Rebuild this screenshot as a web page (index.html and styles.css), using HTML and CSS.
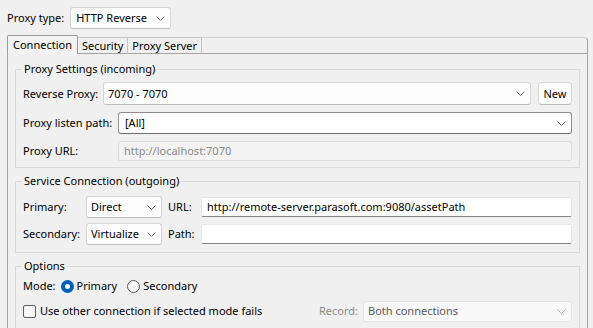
FILE: index.html
```html
<!DOCTYPE html>
<html lang="en">
  <head>
    <meta charset="UTF-8" />
    <title>Proxy Settings</title>
    <link rel="stylesheet" href="styles.css">
  </head>
  <body>
    <div class="type-row">
      <label>Proxy type:</label>
      <div class="combo combo-type">
        <span>HTTP Reverse</span>
        <svg class="chev" width="9" height="5" viewBox="0 0 9 5"><polyline points="0.5,0.5 4.5,4.5 8.5,0.5" /></svg>
      </div>
    </div>

    <div class="tabs">
      <div class="tab active">Connection</div>
      <div class="tab">Security</div>
      <div class="tab">Proxy Server</div>
      <div class="tab-fill"></div>
    </div>

    <div class="panel">
      <fieldset class="group">
        <legend>Proxy Settings (incoming)</legend>
        <div class="row row-tall">
          <label class="lbl-rev">Reverse Proxy:</label>
          <div class="combo grow">
            <span>7070 - 7070</span>
            <svg class="chev" width="9" height="5" viewBox="0 0 9 5"><polyline points="0.5,0.5 4.5,4.5 8.5,0.5" /></svg>
          </div>
          <button class="btn">New</button>
        </div>
        <div class="row row-listen">
          <label class="lbl-path">Proxy listen path:</label>
          <div class="combo combo-edit grow">
            <span>[All]</span>
            <svg class="chev" width="9" height="5" viewBox="0 0 9 5"><polyline points="0.5,0.5 4.5,4.5 8.5,0.5" /></svg>
          </div>
        </div>
        <div class="row row-url">
          <label class="lbl-path">Proxy URL:</label>
          <div class="field disabled grow">http://localhost:7070</div>
        </div>
      </fieldset>

      <fieldset class="group group-service">
        <legend>Service Connection (outgoing)</legend>
        <div class="row">
          <label class="lbl-conn">Primary:</label>
          <div class="combo combo-mode">
            <span>Direct</span>
            <svg class="chev" width="9" height="5" viewBox="0 0 9 5"><polyline points="0.5,0.5 4.5,4.5 8.5,0.5" /></svg>
          </div>
          <label class="lbl-side">URL:</label>
          <div class="field grow">http://remote-server.parasoft.com:9080/assetPath</div>
        </div>
        <div class="row row-second">
          <label class="lbl-conn">Secondary:</label>
          <div class="combo combo-mode">
            <span>Virtualize</span>
            <svg class="chev" width="9" height="5" viewBox="0 0 9 5"><polyline points="0.5,0.5 4.5,4.5 8.5,0.5" /></svg>
          </div>
          <label class="lbl-side">Path:</label>
          <div class="field grow"></div>
        </div>
      </fieldset>

      <fieldset class="group group-options">
        <legend>Options</legend>
        <div class="mode-row">
          <span>Mode:</span>
          <label class="choice first"><input type="radio" name="mode" checked /> Primary</label>
          <label class="choice"><input type="radio" name="mode" /> Secondary</label>
        </div>
        <div class="row row-check">
          <label class="choice check"><input type="checkbox" /> Use other connection if selected mode fails</label>
          <div class="record">
            <span class="muted">Record:</span>
            <div class="combo combo-off">
              <span>Both connections</span>
              <svg class="chev" width="9" height="5" viewBox="0 0 9 5"><polyline points="0.5,0.5 4.5,4.5 8.5,0.5" /></svg>
            </div>
          </div>
        </div>
      </fieldset>
    </div>
  </body>
</html>
```

FILE: styles.css
```css
* {
  box-sizing: border-box;
}

html,
body {
  margin: 0;
}

body {
  font-family: "Noto Sans", "Segoe UI", sans-serif;
  font-size: 11px;
  line-height: 16px;
  color: #000;
  background: #f0f0f0;
  padding: 7px 5px 0 7px;
  height: 328px;
  overflow: hidden;
}

.type-row {
  display: flex;
  align-items: center;
  gap: 6px;
  height: 22px;
}

.combo {
  display: flex;
  align-items: center;
  justify-content: space-between;
  height: 22px;
  padding: 0 5px 0 4px;
  background: #fdfdfd;
  border: 1px solid #d6d6d6;
  border-bottom-color: #bdbdbd;
  border-radius: 3px;
  white-space: nowrap;
}

.combo-type {
  width: 101px;
  padding-left: 5px;
}

.chev {
  flex: none;
}

.chev polyline {
  fill: none;
  stroke: #707070;
  stroke-width: 1;
}

.tabs {
  display: flex;
  align-items: flex-end;
  height: 19px;
  margin-top: 6px;
}

.tab {
  height: 17px;
  padding: 0 4px;
  line-height: 15px;
  border: 1px solid #c4c4c4;
  border-left: none;
  border-bottom-color: #a3a3a3;
  white-space: nowrap;
}

.tab.active {
  height: 19px;
  padding: 0 5px;
  line-height: 18px;
  border: 1px solid #9a9a9a;
  border-bottom: none;
  border-radius: 2px 2px 0 0;
  background: #f3f3f3;
}

.tab-fill {
  flex: 1;
  height: 17px;
  border: 1px solid #a3a3a3;
  border-left: none;
  border-top-color: #cfcfcf;
  border-top-right-radius: 4px;
}

.panel {
  border: 1px solid #a3a3a3;
  border-top: none;
  padding: 7px 7px 0 7px;
  height: 300px;
}

.group {
  margin: 0;
  min-width: 0;
  border: 1px solid #dadada;
  padding: 5px 7px 6px 7px;
}

.group legend {
  margin-left: -1px;
  padding: 0 2px;
  line-height: 16px;
}

.group-service {
  margin-top: 5px;
  padding-top: 7px;
  padding-bottom: 7px;
}

.group-options {
  margin-top: 5px;
  padding-top: 4px;
}

.row {
  display: flex;
  align-items: center;
  height: 22px;
}

.row-tall {
  height: 23px;
}

.row-tall .combo {
  height: 23px;
}

.row-listen {
  margin-top: 7px;
}

.row-url {
  margin-top: 7px;
  height: 20px;
}

.row-second {
  margin-top: 5px;
}

.grow {
  flex: 1;
  min-width: 0;
}

.lbl-rev {
  width: 80px;
  flex: none;
}

.lbl-path {
  width: 95px;
  flex: none;
}

.lbl-conn {
  width: 63px;
  flex: none;
}

.lbl-side {
  width: 33px;
  margin-left: 6px;
  flex: none;
}

.combo-edit {
  background: #fff;
  border-color: #8e8e8e;
  border-bottom-color: #6e6e6e;
  padding-left: 6px;
}

.combo-mode {
  width: 76px;
  flex: none;
}

.btn {
  width: 34px;
  height: 23px;
  margin-left: 7px;
  padding: 0;
  font: inherit;
  color: #000;
  background: #fdfdfd;
  border: 1px solid #d6d6d6;
  border-bottom-color: #bdbdbd;
  border-radius: 4px;
}

.field {
  height: 20px;
  padding: 0 5px;
  line-height: 18px;
  background: #fff;
  border: 1px solid #e6e6e6;
  border-bottom-color: #868686;
  border-radius: 2px;
  white-space: nowrap;
  overflow: hidden;
}

.field.disabled {
  background: #f3f3f3;
  border-color: #dcdcdc;
  color: #8a8a8a;
}

.mode-row {
  display: flex;
  align-items: center;
  height: 16px;
}

.choice {
  display: flex;
  align-items: center;
  gap: 3px;
  white-space: nowrap;
}

.choice.first {
  margin-left: 5px;
  margin-right: 10px;
}

.choice input {
  appearance: none;
  margin: 0;
  width: 13px;
  height: 13px;
  flex: none;
  background: #f7f7f7;
  border: 1px solid #5c5c5c;
}

.choice input[type="radio"] {
  border-radius: 50%;
}

.choice input[type="radio"]:checked {
  border: 4px solid #005fb8;
  background: #fff;
}

.choice input[type="checkbox"] {
  border-radius: 2px;
}

.check {
  gap: 4px;
}

.row-check {
  margin-top: 6px;
}

.record {
  display: flex;
  align-items: center;
  gap: 5px;
  margin-left: auto;
}

.muted {
  color: #8a8a8a;
}

.combo-off {
  width: 209px;
  height: 21px;
  background: #f9f9f9;
  border-color: #e5e5e5;
  color: #5a5a5a;
}

.combo-off .chev polyline {
  stroke: #b0b0b0;
}
```
